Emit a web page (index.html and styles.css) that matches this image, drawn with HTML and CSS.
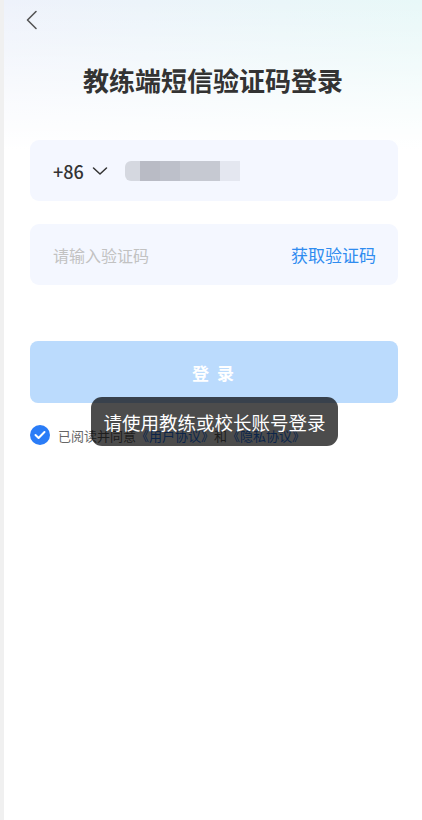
FILE: index.html
```html
<!DOCTYPE html>
<html lang="zh-CN">
<head>
    <meta charset="UTF-8">
    <meta name="viewport" content="width=device-width, initial-scale=1.0">
    <title>教练端短信验证码登录</title>
    <link rel="stylesheet" href="styles.css">
</head>
<body>
    <div class="page">
        <div class="nav">
            <svg class="back" width="12" height="20" viewBox="0 0 12 20">
                <path d="M10 1.5 L1.5 10 L10 18.5" fill="none" stroke="#555" stroke-width="1.6" stroke-linecap="round" stroke-linejoin="round"/>
            </svg>
        </div>

        <h1 class="title">教练端短信验证码登录</h1>

        <div class="form">
            <div class="field">
                <span class="code">+86</span>
                <svg class="arrow" width="16" height="10" viewBox="0 0 16 10">
                    <path d="M1.5 2 L8 8 L14.5 2" fill="none" stroke="#333" stroke-width="1.5" stroke-linecap="round" stroke-linejoin="round"/>
                </svg>
                <div class="phone">
                    <span class="blk b1"></span>
                    <span class="blk b2"></span>
                    <span class="blk b3"></span>
                    <span class="blk b4"></span>
                    <span class="blk b5"></span>
                </div>
            </div>

            <div class="field">
                <span class="placeholder">请输入验证码</span>
                <span class="get-code">获取验证码</span>
            </div>

            <button class="login" type="button">登 录</button>

            <div class="agree">
                <span class="check">
                    <svg width="12" height="10" viewBox="0 0 12 10">
                        <path d="M1.5 5 L4.6 8 L10.5 2" fill="none" stroke="#fff" stroke-width="2" stroke-linecap="round" stroke-linejoin="round"/>
                    </svg>
                </span>
                <span>已阅读并同意<a href="#">《用户协议》</a>和<a href="#">《隐私协议》</a></span>
            </div>
        </div>

        <div class="toast">请使用教练或校长账号登录</div>
    </div>
</body>
</html>
```

FILE: styles.css
```css
body {
    margin: 0;
    padding: 0;
    background-color: #f0f0f0;
    font-family: "Noto Sans CJK SC", "Noto Sans", sans-serif;
}

.page {
    position: relative;
    margin-left: 4px;
    min-height: 820px;
    background-color: #fff;
    background-image:
        linear-gradient(to bottom, rgba(255, 255, 255, 0) 0, #fff 150px),
        linear-gradient(to right, #eef2fb, #e8f8f8);
    background-repeat: no-repeat;
    background-size: 100% 160px;
}

.nav {
    height: 40px;
    display: flex;
    align-items: center;
    padding-left: 22px;
}

.back {
    display: block;
}

.title {
    margin: 22px 0 0;
    text-align: center;
    font-size: 26px;
    line-height: 36px;
    font-weight: 700;
    color: #333;
}

.form {
    display: flex;
    flex-direction: column;
    padding: 42px 24px 0 26px;
}

.field {
    height: 61px;
    display: flex;
    align-items: center;
    padding: 0 22px 0 23px;
    background-color: #f4f7ff;
    border-radius: 9px;
    margin-bottom: 23px;
}

.code {
    font-size: 18px;
    font-weight: 500;
    color: #333;
}

.arrow {
    margin-left: 8px;
    margin-right: 17px;
}

.phone {
    display: flex;
    height: 20px;
    filter: blur(0.6px);
}

.blk {
    display: block;
    height: 20px;
}

.b1 { width: 15px; background: #d5d8e0; border-radius: 6px 0 0 6px; }
.b2 { width: 20px; background: #b9bbc5; }
.b3 { width: 20px; background: #bdc0ca; }
.b4 { width: 40px; background: #c6c9d2; }
.b5 { width: 20px; background: #e4e7f0; }

.placeholder {
    flex: 1;
    font-size: 16px;
    color: #c2c2c2;
}

.get-code {
    font-size: 17px;
    color: #2f8cf0;
}

.login {
    margin-top: 33px;
    height: 62px;
    border: none;
    border-radius: 8px;
    background-color: #bbdbfd;
    color: #fff;
    font-family: inherit;
    font-size: 17px;
    font-weight: 700;
    letter-spacing: 2px;
}

.agree {
    display: flex;
    align-items: center;
    margin-top: 22px;
    font-size: 13px;
    color: #666;
}

.check {
    width: 20px;
    height: 20px;
    border-radius: 50%;
    background-color: #2a7cf7;
    display: flex;
    align-items: center;
    justify-content: center;
    margin-right: 8px;
}

.agree a {
    color: #2a7cf7;
    text-decoration: none;
}

.toast {
    position: absolute;
    left: 87px;
    top: 397px;
    width: 247px;
    height: 49px;
    border-radius: 11px;
    background-color: rgba(0, 0, 0, 0.7);
    color: #fff;
    font-size: 18.5px;
    display: flex;
    align-items: center;
    justify-content: center;
}
```
